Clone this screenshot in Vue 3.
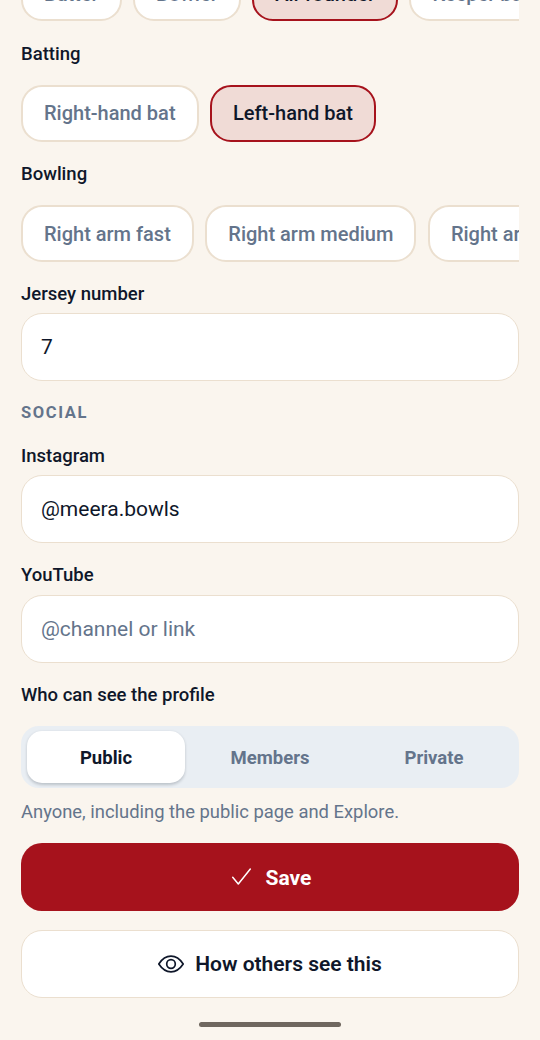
<script setup>
const roles = ['Batter', 'Bowler', 'All-rounder', 'Keeper batter']
const batting = ['Right-hand bat', 'Left-hand bat']
const bowling = ['Right arm fast', 'Right arm medium', 'Right arm spin', 'Left arm fast']
const visibility = ['Public', 'Members', 'Private']
</script>

<template>
  <main class="page">
    <div class="chips first">
      <button v-for="r in roles" :key="r" class="chip" :class="{ on: r === 'All-rounder' }">{{ r }}</button>
    </div>

    <div class="label batting">Batting</div>
    <div class="chips">
      <button v-for="b in batting" :key="b" class="chip" :class="{ on: b === 'Left-hand bat' }">{{ b }}</button>
    </div>

    <div class="label bowling">Bowling</div>
    <div class="chips">
      <button v-for="b in bowling" :key="b" class="chip">{{ b }}</button>
    </div>

    <div class="label jersey">Jersey number</div>
    <div class="field">7</div>

    <div class="section">SOCIAL</div>

    <div class="label insta">Instagram</div>
    <div class="field">@meera.bowls</div>

    <div class="label yt">YouTube</div>
    <div class="field placeholder">@channel or link</div>

    <div class="label who">Who can see the profile</div>
    <div class="segment">
      <div v-for="v in visibility" :key="v" class="seg" :class="{ active: v === 'Public' }">{{ v }}</div>
    </div>
    <p class="hint">Anyone, including the public page and Explore.</p>

    <button class="btn primary">
      <svg class="check" width="24" height="24" viewBox="0 0 24 24" fill="none" stroke="currentColor" stroke-width="1.5" stroke-linecap="round" stroke-linejoin="round"><path d="M3.7 12.3 L9.3 19 L21.3 4" /></svg>
      <span>Save</span>
    </button>
    <button class="btn secondary">
      <svg width="26" height="26" viewBox="0 0 26 26" fill="none" stroke="currentColor" stroke-width="1.7" stroke-linejoin="round"><path d="M0.8 13 C4.6 7.2 9 5.2 13 5.2 C17 5.2 21.4 7.2 25.2 13 C21.4 18.8 17 20.8 13 20.8 C9 20.8 4.6 18.8 0.8 13 Z" /><circle cx="13" cy="13" r="4.3" /></svg>
      <span>How others see this</span>
    </button>

    <div class="home"></div>
  </main>
</template>

<style>
html, body { margin: 0; background: #faf5ee; }
</style>

<style scoped>
.page {
  width: 540px;
  height: 1040px;
  overflow: hidden;
  box-sizing: border-box;
  padding: 0 21px;
  background: #faf5ee;
  font-family: Roboto, "Liberation Sans", sans-serif;
  color: #0f172a;
}
.chips {
  display: flex;
  gap: 11.5px;
  overflow: hidden;
  height: 57px;
}
.chips.first { margin-top: -36px; }
.first .chip { padding-top: 3px; }
.chip {
  flex: none;
  height: 57px;
  box-sizing: border-box;
  padding: 0 21px;
  border: 2px solid #ebdfcf;
  border-radius: 21px;
  background: #fff;
  color: #64748b;
  font: 500 20px/1 Roboto, sans-serif;
}
.chip.on {
  background: #f0dbd6;
  border-color: #a6121c;
  color: #0f172a;
}
.label {
  font-size: 18.5px;
  font-weight: 500;
  line-height: 24px;
  color: #0f172a;
}
.batting { margin-top: 21px; margin-bottom: 18.5px; }
.bowling { margin-top: 20px; margin-bottom: 19.5px; }
.jersey { margin-top: 20px; margin-bottom: 7px; }
.insta { margin-top: 21px; margin-bottom: 7px; }
.yt { margin-top: 20px; margin-bottom: 8px; }
.who { margin-top: 20px; margin-bottom: 19px; }
.field {
  height: 68px;
  box-sizing: border-box;
  padding: 0 19px;
  display: flex;
  align-items: center;
  background: #fff;
  border: 1.5px solid #ebdfcf;
  border-radius: 21px;
  font-size: 21px;
  color: #0f172a;
}
.placeholder { color: #64748b; }
.section {
  margin-top: 22px;
  font-size: 16.5px;
  font-weight: 700;
  line-height: 20px;
  letter-spacing: 1.6px;
  color: #64748b;
}
.segment {
  display: flex;
  height: 62px;
  box-sizing: border-box;
  padding: 3px;
  background: #e9eef3;
  border-radius: 18px;
}
.seg {
  flex: 1;
  margin: 2px 3px;
  padding-top: 1px;
  display: flex;
  align-items: center;
  justify-content: center;
  border-radius: 15px;
  font-size: 18.5px;
  font-weight: 700;
  color: #64748b;
}
.seg.active {
  background: #fff;
  color: #0f172a;
  box-shadow: 0 1.5px 3px rgba(15, 23, 42, 0.2);
}
.hint {
  margin: 12px 0 0;
  font-size: 18.4px;
  line-height: 24px;
  color: #64748b;
}
.btn {
  display: flex;
  align-items: center;
  justify-content: center;
  width: 100%;
  height: 68px;
  box-sizing: border-box;
  border-radius: 21px;
  font: 700 21px/1 Roboto, sans-serif;
}
.primary {
  margin-top: 19px;
  gap: 13px;
  background: #a6121c;
  border: 0;
  color: #fff;
}
.primary span { padding-top: 2px; }
.secondary {
  margin-top: 19px;
  gap: 11px;
  background: #fff;
  border: 1.5px solid #ebdfcf;
  color: #0f172a;
  font-weight: 600;
}
.home {
  width: 142px;
  height: 5px;
  margin: 24px auto 0;
  border-radius: 3px;
  background: #6f675f;
}
</style>
